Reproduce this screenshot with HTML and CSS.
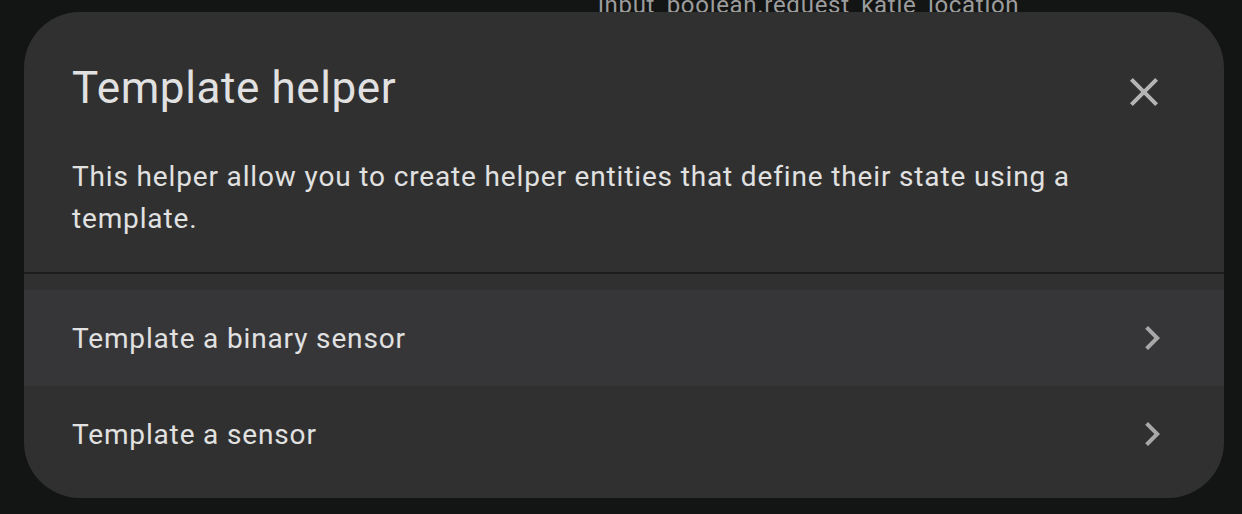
FILE: index.html
```html
<!DOCTYPE html>
<html lang="en">
<head>
<meta charset="utf-8">
<title>Template helper</title>
<link rel="stylesheet" href="styles.css">
</head>
<body>
<div class="page">
  <div class="bg-content">
    <div class="bg-row">input_boolean.request_katie_location</div>
  </div>
  <div class="scrim">
    <div class="dialog" role="dialog" aria-labelledby="dlg-title">
      <div class="dialog-header">
        <h2 id="dlg-title" class="dialog-title">Template helper</h2>
        <button class="icon-button close-button" aria-label="Close">
          <svg viewBox="0 0 24 24" class="icon"><path d="M19,6.41L17.59,5L12,10.59L6.41,5L5,6.41L10.59,12L5,17.59L6.41,19L12,13.41L17.59,19L19,17.59L13.41,12L19,6.41Z"/></svg>
        </button>
      </div>
      <p class="dialog-desc">This helper allow you to create helper entities that define their state using a template.</p>
      <div class="divider"></div>
      <ul class="list">
        <li class="list-item hovered">
          <span class="item-label">Template a binary sensor</span>
          <svg viewBox="0 0 24 24" class="icon chevron"><path d="M8.59,16.58L13.17,12L8.59,7.41L10,6L16,12L10,18L8.59,16.58Z"/></svg>
        </li>
        <li class="list-item">
          <span class="item-label">Template a sensor</span>
          <svg viewBox="0 0 24 24" class="icon chevron"><path d="M8.59,16.58L13.17,12L8.59,7.41L10,6L16,12L10,18L8.59,16.58Z"/></svg>
        </li>
      </ul>
    </div>
  </div>
</div>
</body>
</html>
```
FILE: styles.css
```css
html, body {
  margin: 0;
  padding: 0;
  background: #131514;
  font-family: Roboto, "Noto Sans", sans-serif;
  overflow: hidden;
}

.page {
  position: relative;
  width: 1242px;
  height: 514px;
  overflow: hidden;
}

.bg-content {
  padding-left: 598px;
  margin-top: -7px;
}

.bg-row {
  font-size: 24px;
  line-height: 24px;
  letter-spacing: 0.7px;
  color: #9c9c9c;
  white-space: nowrap;
}

.scrim {
  position: absolute;
  inset: 0;
  padding: 12px 18px 16px 24px;
}

.dialog {
  width: 1200px;
  height: 486px;
  box-sizing: border-box;
  background: #303030;
  border-radius: 56px;
  overflow: hidden;
  display: flex;
  flex-direction: column;
}

.dialog-header {
  display: flex;
  align-items: center;
  justify-content: space-between;
  padding: 44px 32px 0 48px;
}

.dialog-title {
  margin: 0;
  font-size: 44px;
  line-height: 64px;
  font-weight: 400;
  letter-spacing: 0.6px;
  color: #e1e1e1;
}

.icon-button {
  width: 96px;
  height: 96px;
  padding: 24px;
  margin: -12px 0 -20px 0;
  border: 0;
  background: transparent;
  box-sizing: border-box;
  display: flex;
  align-items: center;
  justify-content: center;
}

.icon {
  width: 48px;
  height: 48px;
  display: block;
}

.close-button .icon path {
  fill: #b4b4b4;
}

.dialog-desc {
  margin: 36px 48px 0 48px;
  font-size: 28px;
  line-height: 42px;
  letter-spacing: 0.85px;
  color: #e1e1e1;
  padding-bottom: 32px;
}

.divider {
  height: 2px;
  background: #1c1c1c;
}

.list {
  list-style: none;
  margin: 0;
  padding: 16px 0;
}

.list-item {
  height: 96px;
  display: flex;
  align-items: center;
  justify-content: space-between;
  padding: 0 48px;
}

.list-item.hovered {
  background: #363638;
}

.item-label {
  font-size: 28px;
  letter-spacing: 0.85px;
  color: #e1e1e1;
}

.chevron path {
  fill: #a8a8a8;
}
```
